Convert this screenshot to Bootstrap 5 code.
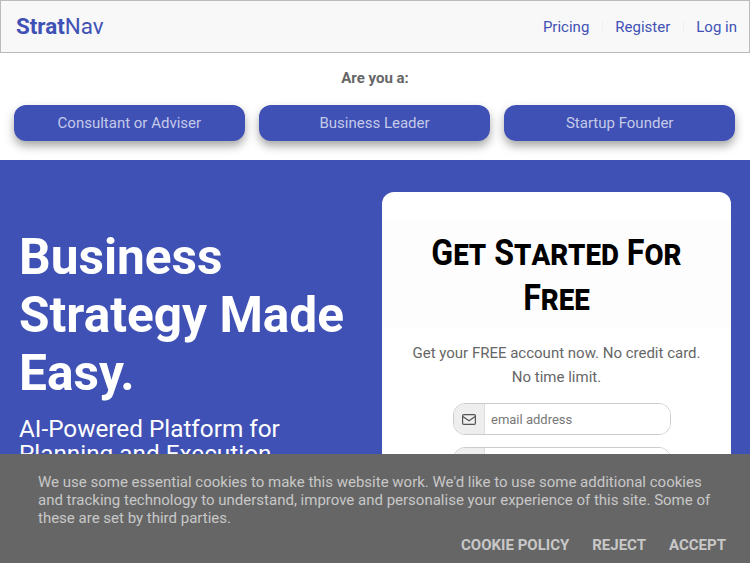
<!DOCTYPE html>
<html lang="en">
<head>
  <meta charset="UTF-8">
  <title>StratNav</title>
  <link href="https://cdn.jsdelivr.net/npm/bootstrap@5.3.3/dist/css/bootstrap.min.css" rel="stylesheet">
  <style>
    html, body {
      height: 100%;
      overflow: hidden;
    }
    body {
      font-family: Roboto, sans-serif;
      color: #666;
    }
    .top-bar {
      height: 53px;
      padding: 0 12px 0 15px;
      background: #f8f8f8;
      border: 1px solid #bbb;
    }
    .brand-link {
      font-size: 22.4px;
      color: #3f51b5;
      text-decoration: none;
    }
    .top-link {
      color: #3f51b5;
      text-decoration: none;
      font-size: 15px;
      padding-top: 1px;
    }
    .top-links {
      gap: 12.5px;
    }
    .top-sep {
      width: 1px;
      height: 12px;
      background: #f0f0f0;
    }
    .ask-line {
      padding-top: 16px;
      height: 52px;
      font-size: 15px;
      font-weight: 700;
      line-height: 19px;
    }
    .role-row {
      padding: 0 15px 0 14px;
      gap: 14.5px;
      height: 55px;
    }
    .role-btn {
      flex: 1 1 0;
      height: 36px;
      padding: 0;
      font-size: 15px;
      color: #c5cae9;
      background: #3f51b5;
      border: 0;
      border-radius: 12px;
      box-shadow: 0 5px 10px rgba(0, 0, 0, 0.35);
    }
    .hero {
      background: #3f51b5;
      color: #fff;
      padding: 32px 19px 0 19px;
      height: 600px;
    }
    .hero-text {
      width: 340px;
      padding-top: 36px;
    }
    .hero-title {
      font-size: 49.6px;
      font-weight: 700;
      line-height: 58px;
      margin-bottom: 13.5px;
    }
    .hero-sub {
      font-size: 24.3px;
      font-weight: 400;
      line-height: 25px;
    }
    .signup-box {
      width: 349px;
      height: 500px;
      background: #fff;
      border-radius: 12px;
      padding-top: 28px;
      color: #666;
    }
    .signup-head {
      height: 107px;
      padding: 10px 0 0;
      background: #fdfdfd;
      color: #000;
      font-size: 37px;
      font-weight: 700;
      font-variant: small-caps;
      line-height: 45px;
      text-align: center;
      margin-bottom: 14px;
    }
    .signup-head span {
      display: block;
      transform: scaleX(0.87);
    }
    .signup-note {
      font-size: 15px;
      line-height: 24px;
      text-align: center;
      margin: 0 20px 14px;
    }
    .field-group {
      width: 218px;
      height: 32px;
      margin: 0 0 12px 71px;
      border: 1px solid #ccc;
      border-radius: 12px;
      overflow: hidden;
    }
    .field-icon {
      width: 31px;
      background: #eee;
      border-right: 1px solid #ddd;
    }
    .field-input {
      border: 0;
      outline: 0;
      min-width: 0;
      flex: 1;
      padding: 1px 6px 0;
      font-size: 13px;
      color: #666;
    }
    .field-input::placeholder {
      color: #777;
    }
    .cookie-bar {
      position: fixed;
      left: 0;
      right: 0;
      bottom: 0;
      height: 109px;
      padding: 19px 24px 0 38px;
      background: #666;
      color: #c8c8c8;
      font-size: 15px;
      line-height: 18px;
    }
    .cookie-text {
      margin-bottom: 9px;
    }
    .cookie-actions {
      gap: 23px;
      font-weight: 700;
      font-size: 15px;
    }
    .cookie-link {
      color: #c8c8c8;
      text-decoration: none;
      text-transform: uppercase;
    }
  </style>
</head>
<body>

  <nav class="top-bar d-flex justify-content-between align-items-center">
    <a class="brand-link" href="#"><b>Strat</b>Nav</a>
    <div class="top-links d-flex align-items-center">
      <a class="top-link" href="#">Pricing</a>
      <span class="top-sep"></span>
      <a class="top-link" href="#">Register</a>
      <span class="top-sep"></span>
      <a class="top-link" href="#">Log in</a>
    </div>
  </nav>

  <div class="ask-line text-center">Are you a:</div>
  <div class="role-row d-flex">
    <button type="button" class="btn role-btn">Consultant or Adviser</button>
    <button type="button" class="btn role-btn">Business Leader</button>
    <button type="button" class="btn role-btn">Startup Founder</button>
  </div>

  <section class="hero d-flex justify-content-between">
    <div class="hero-text">
      <h1 class="hero-title">Business Strategy Made Easy.</h1>
      <h2 class="hero-sub">AI-Powered Platform for Planning and Execution</h2>
    </div>
    <div class="signup-box">
      <div class="signup-head"><span>Get Started For<br>Free</span></div>
      <p class="signup-note">Get your FREE account now. No credit card. No time limit.</p>
      <div class="field-group d-flex">
        <span class="field-icon d-flex justify-content-center align-items-center">
          <svg width="14" height="11" viewBox="0 0 14 11" fill="none" stroke="#555" stroke-width="1.2"><rect x="0.6" y="0.6" width="12.8" height="9.8" rx="1.2"/><path d="M0.8 2.6 7 6.8l6.2-4.2"/></svg>
        </span>
        <input class="field-input" type="email" placeholder="email address">
      </div>
      <div class="field-group d-flex">
        <span class="field-icon d-flex justify-content-center align-items-center"></span>
        <input class="field-input" type="password" placeholder="password">
      </div>
    </div>
  </section>

  <div class="cookie-bar">
    <p class="cookie-text">We use some essential cookies to make this website work. We'd like to use some additional cookies and tracking technology to understand, improve and personalise your experience of this site. Some of these are set by third parties.</p>
    <div class="cookie-actions d-flex justify-content-end">
      <a class="cookie-link" href="#">Cookie Policy</a>
      <a class="cookie-link" href="#">Reject</a>
      <a class="cookie-link" href="#">Accept</a>
    </div>
  </div>

  <script src="https://cdn.jsdelivr.net/npm/bootstrap@5.3.3/dist/js/bootstrap.bundle.min.js"></script>
</body>
</html>
